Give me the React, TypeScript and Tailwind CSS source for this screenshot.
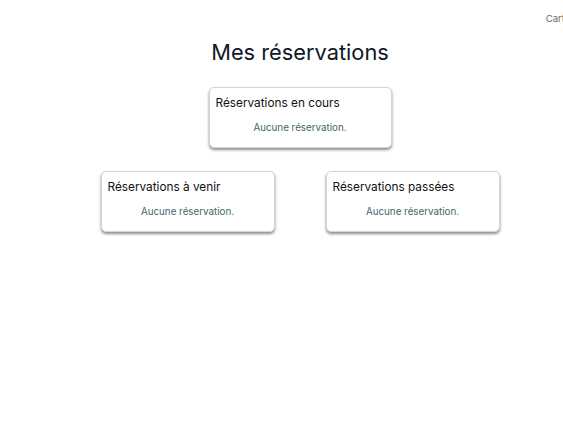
import React from "react";

function Card({ title, w }: { title: string; w: string }) {
  return (
    <div
      className={`${w} h-[61px] rounded-[5px] border border-[#d4d4d4] bg-white shadow-[0_2px_3px_rgba(0,0,0,0.45)] px-[6px] pt-[7px]`}
    >
      <div className="text-[11.8px] leading-[16px] text-[#111]">{title}</div>
      <div className="mt-[10px] text-center text-[9.8px] leading-[14px] text-[#3f6663]">
        Aucune réservation.
      </div>
    </div>
  );
}

export default function App() {
  return (
    <div
      className="min-w-[600px] min-h-[438px] bg-white"
      style={{ fontFamily: "Inter, 'Noto Sans', sans-serif" }}
    >
      <div className="flex justify-end pr-[35px] pt-[12px] h-[30px]">
        <span className="text-[9.6px] leading-[14px] text-[#6b6b6b]">Cart</span>
      </div>
      <h1 className="text-center text-[21.8px] leading-[30px] text-[#111827] mt-[7px]">
        Mes réservations
      </h1>
      <div className="flex justify-center mt-[20px]">
        <Card title="Réservations en cours" w="w-[183px]" />
      </div>
      <div className="grid grid-cols-2 w-[450px] mx-auto mt-[23px]">
        <div className="flex justify-center">
          <Card title="Réservations à venir" w="w-[174px]" />
        </div>
        <div className="flex justify-center">
          <Card title="Réservations passées" w="w-[174px]" />
        </div>
      </div>
    </div>
  );
}
